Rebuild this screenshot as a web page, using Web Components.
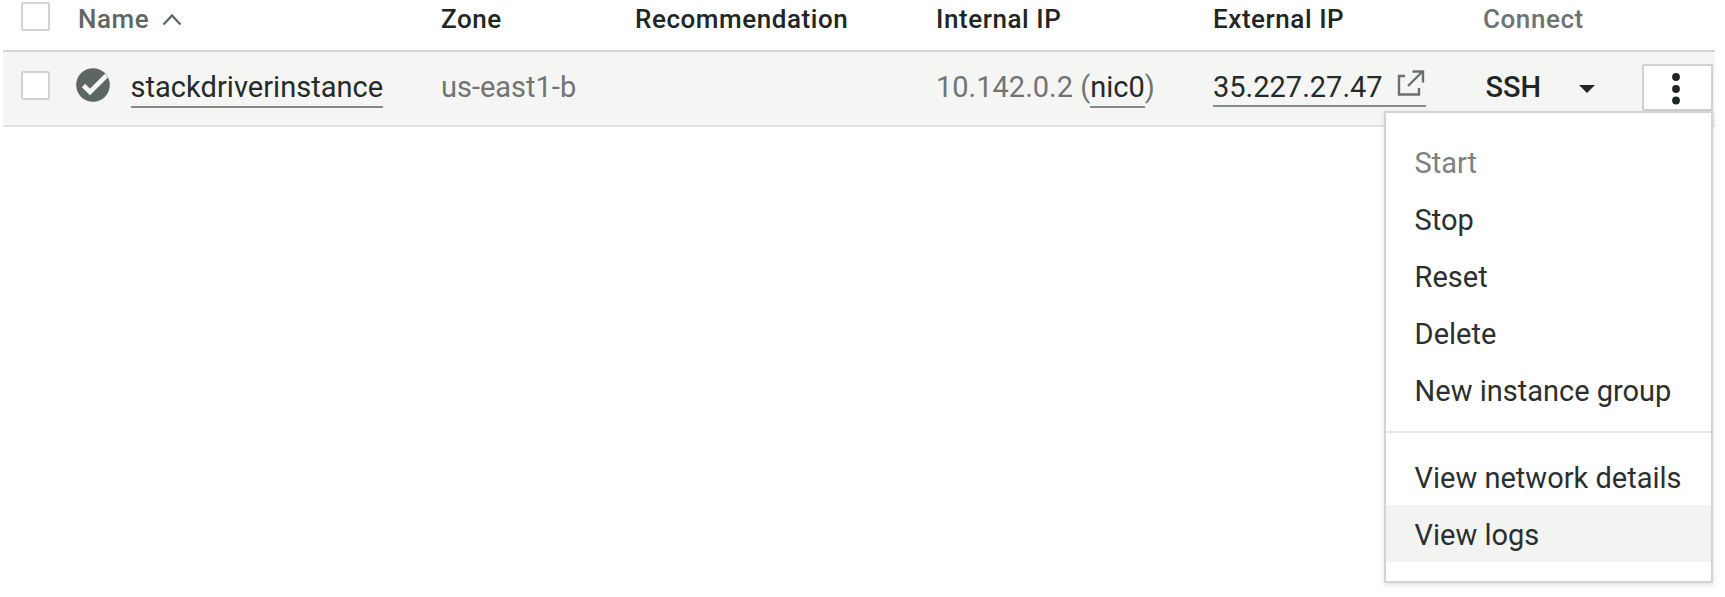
<!DOCTYPE html>
<html lang="en"><head><meta charset="utf-8"><title>VM instances</title>
<style>
html,body{margin:0;background:#fff}
body{width:1725px;height:597px;overflow:hidden;font-family:Roboto,"Liberation Sans",sans-serif}
</style></head><body>
<vm-table>
  <vm-head slot="head"></vm-head>
  <vm-row slot="row"></vm-row>
</vm-table>
<script>
const define=(name,html)=>customElements.define(name,class extends HTMLElement{
  constructor(){super();this.attachShadow({mode:'open'}).innerHTML=html;}
});
const cols='display:grid;grid-template-columns:75px 363px 194px 301px 277px 270px 159px 73px;';

define('check-box',`<style>:host{display:block;box-sizing:border-box;width:29px;height:29px;border:2px solid #d2d3d2;border-radius:2px;background:#fff}</style>`);

define('vm-table',`<style>:host{display:block;width:1712px;margin-left:3px;position:relative}</style><slot name="head"></slot><slot name="row"></slot>`);

define('vm-head',`<style>
:host{${cols}height:50px;border-bottom:2px solid #d3d4d3;font-size:26px;font-weight:500;line-height:38px;letter-spacing:.56px;color:#202624;white-space:nowrap}
check-box{margin:2px 0 0 18px}
.muted{color:#5f6764}
.light{color:#6c7471}
svg{margin-left:13px;vertical-align:1px}
</style>
<check-box></check-box>
<span class="muted"><span>Name</span><svg width="20" height="14" viewBox="0 0 20 14"><path d="M1.500 11.500 10 2.500l8.500 9" fill="none" stroke="#5f6764" stroke-width="2.300"/></svg></span>
<span>Zone</span><span>Recommendation</span><span>Internal IP</span><span>External IP</span><span class="light">Connect</span>`);

define('action-menu-item',`<style>
:host{display:block;height:57px;line-height:58px;padding-left:28.600px;font-size:29px;color:#2b302e;white-space:nowrap}
:host([slot=view]){line-height:60px}
:host([disabled]){color:#7b817f}
:host([active]){background:#f3f3f2}
</style><slot></slot>`);

define('action-menu',`<style>
:host{display:block;box-sizing:border-box;width:329px;height:472px;border:2px solid #d2d3d2;background:#fff;padding-top:21px;box-shadow:0 2px 5px rgba(0,0,0,.12)}
hr{border:0;height:2px;margin:12px 0 15px;background:#e8e8e8}
</style><slot></slot><hr><slot name="view"></slot>`);

define('vm-row',`<style>
:host{${cols}height:73px;border-bottom:2px solid #e3e3e2;background:#f5f5f4;font-size:29px;line-height:70px;color:#6f7573;white-space:nowrap;position:relative}
check-box{margin:19px 0 0 18px}
.name{display:flex}
.name svg{margin:16px 21px 0 -2.500px;flex:none}
.name a{letter-spacing:.04px}
a{display:inline-block;line-height:34px;height:36px;border-bottom:2px solid #848c89;color:#252b29}
.ssh{color:#202624;font-weight:500;font-size:29px;display:flex;padding-left:2.500px}
.more{box-sizing:border-box;width:71px;height:47px;margin:12px 0 0 0;border:2px solid #cfd0cf;border-radius:2px;background:#fff;display:flex;justify-content:center}
action-menu{position:absolute;left:1381px;top:59px}
</style>
<check-box></check-box>
<span class="name"><svg width="34" height="34" viewBox="0 0 34 34"><circle cx="17" cy="17" r="16.800" fill="#5c6663"/><path d="M7.500 17.500l6.500 6.500L30.500 7.500" fill="none" stroke="#f5f5f4" stroke-width="4.600"/></svg><span><a>stackdriverinstance</a></span></span>
<span>us-east1-b</span><span></span>
<span><span>10.142.0.2 (</span><a>nic0</a><span>)</span></span>
<span><a class="ext"><span>35.227.27.47</span><svg width="28" height="28" viewBox="0 0 28 28" style="margin:0 1px 0 14px"><path d="M8 7H2v18.500h20V19M11 17 25 3M15.500 2.500H26v11" fill="none" stroke="#69716e" stroke-width="2.400"/></svg></a></span>
<span class="ssh"><span>SSH</span><svg width="16" height="8" viewBox="0 0 16 8" style="margin:33px 0 0 38px"><path d="M0 0h16L8 8z" fill="#202624"/></svg></span>
<span class="more"><svg width="10" height="34" viewBox="0 0 10 34" style="margin:5px 3px 0 0"><g fill="#202624"><circle cx="5" cy="6" r="3.900"/><circle cx="5" cy="18" r="3.900"/><circle cx="5" cy="29.500" r="3.900"/></g></svg></span>
<action-menu>
<action-menu-item disabled>Start</action-menu-item><action-menu-item>Stop</action-menu-item><action-menu-item>Reset</action-menu-item><action-menu-item>Delete</action-menu-item><action-menu-item>New instance group</action-menu-item>
<action-menu-item slot="view">View network details</action-menu-item><action-menu-item slot="view" active>View logs</action-menu-item>
</action-menu>`);
</script></body></html>
